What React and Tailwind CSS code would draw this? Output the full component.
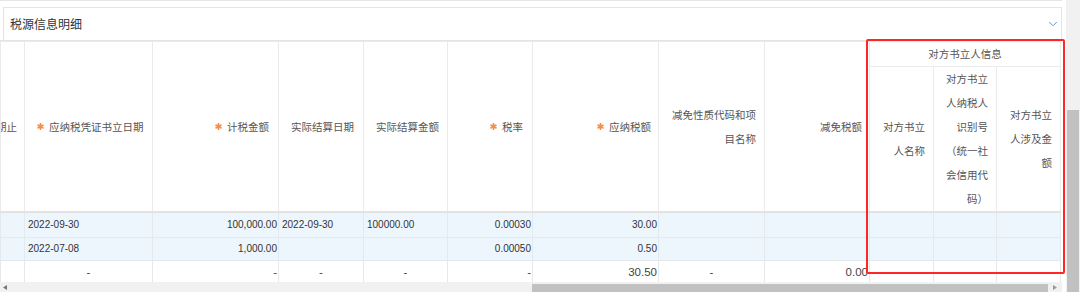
import React from 'react';
import {ChevronDown} from 'lucide-react';

const widths = ['w-[24px]', 'w-[128px]', 'w-[126px]', 'w-[85px]', 'w-[84px]', 'w-[85px]', 'w-[126px]', 'w-[106px]', 'w-[105px]', 'w-[64px]', 'w-[63px]', 'w-[64px]'];

function Star() {
    return (
        <svg width="7" height="7" viewBox="0 0 10 10" className="inline-block shrink-0">
            <g stroke="#f98c47" strokeWidth="2.6" strokeLinecap="round">
                <line x1="5" y1="1.2" x2="5" y2="8.8"/>
                <line x1="1.7" y1="3.1" x2="8.3" y2="6.9"/>
                <line x1="1.7" y1="6.9" x2="8.3" y2="3.1"/>
            </g>
        </svg>
    );
}

const th = "border border-[#ebebeb] font-normal text-[10.5px] leading-[24px] text-[#555] align-middle";

const rows = [
    ["", "2022-09-30", "100,000.00", "2022-09-30", "100000.00", "0.00030", "30.00", "", "", "", "", ""],
    ["", "2022-07-08", "1,000.00", "", "", "0.00050", "0.50", "", "", "", "", ""],
];
const align = ["text-left", "text-left", "text-right", "text-left", "text-left", "text-right", "text-right", "text-left", "text-right", "text-right", "text-right", "text-right"];

const totals = [
    ["", "text-center"], ["-", "text-center"], ["-", "text-right"], ["-", "text-center"], ["-", "text-center"],
    ["-", "text-right"], ["30.50", "text-right"], ["-", "text-center"], ["0.00", "text-right"],
    ["-", "text-center"], ["-", "text-center"], ["-", "text-center"],
];

export default function App() {
    return (
        <div className="relative w-[1080px] h-[292px] overflow-hidden bg-white flex font-['Noto_Sans_CJK_SC',sans-serif]">
            <div className="w-[1066px] flex flex-col">
                <div className="h-[7px] border-t border-[#e6e6e6] w-[1062px]"></div>
                <div className="ml-[3px] w-[1059px] h-[33px] border border-b-0 border-[#e4e4e4] flex items-center justify-between pl-[6px] pr-[1px]">
                    <span className="text-[12px] text-[#333]">税源信息明细</span>
                    <ChevronDown size={14} strokeWidth={1.6} color="#4a90d9"/>
                </div>
                <div className="w-[1062px] h-[242px] overflow-hidden border-t border-[#e4e4e4]">
                    <table className="table-fixed border-collapse w-[1060px]">
                        <colgroup>
                            {widths.map((w, i) => <col key={i} className={w}/>)}
                        </colgroup>
                        <thead>
                        <tr className="h-[24px]">
                            <th rowSpan={2} className={th + " border-b-2 border-b-[#e2e2e2] pr-[7px]"}>
                                <div className="flex justify-end overflow-hidden whitespace-nowrap">
                                    <span className="shrink-0">有效期止</span>
                                </div>
                            </th>
                            <th rowSpan={2} className={th + " border-b-2 border-b-[#e2e2e2] text-left pl-[12px]"}>
                                <span className="inline-flex items-center gap-[5px]"><Star/>应纳税凭证书立日期</span>
                            </th>
                            <th rowSpan={2} className={th + " border-b-2 border-b-[#e2e2e2] text-right pr-[9px]"}>
                                <span className="inline-flex items-center gap-[5px]"><Star/>计税金额</span>
                            </th>
                            <th rowSpan={2} className={th + " border-b-2 border-b-[#e2e2e2] text-left pl-[12px]"}>实际结算日期</th>
                            <th rowSpan={2} className={th + " border-b-2 border-b-[#e2e2e2] text-left pl-[12px]"}>实际结算金额</th>
                            <th rowSpan={2} className={th + " border-b-2 border-b-[#e2e2e2] text-right pr-[9px]"}>
                                <span className="inline-flex items-center gap-[5px]"><Star/>税率</span>
                            </th>
                            <th rowSpan={2} className={th + " border-b-2 border-b-[#e2e2e2] text-right pr-[7px]"}>
                                <span className="inline-flex items-center gap-[5px]"><Star/>应纳税额</span>
                            </th>
                            <th rowSpan={2} className={th + " border-b-2 border-b-[#e2e2e2] text-right pl-[12px] pr-[8px]"}>减免性质代码和项目名称</th>
                            <th rowSpan={2} className={th + " border-b-2 border-b-[#e2e2e2] text-right pr-[7px]"}>减免税额</th>
                            <th colSpan={3} className={th + " text-center h-[24px]"}>对方书立人信息</th>
                        </tr>
                        <tr className="h-[144px]">
                            <th className={th + " border-b-2 border-b-[#e2e2e2] text-right pl-[12px] pr-[8px]"}>对方书立人名称</th>
                            <th className={th + " border-b-2 border-b-[#e2e2e2] text-right pl-[12px] pr-[8px]"}>对方书立人纳税人识别号（统一社会信用代码）</th>
                            <th className={th + " border-b-2 border-b-[#e2e2e2] text-right pl-[12px] pr-[8px]"}>对方书立人涉及金额</th>
                        </tr>
                        </thead>
                        <tbody className="font-['Liberation_Sans','Noto_Sans_CJK_SC',sans-serif] text-[#333]">
                        {rows.map((r, ri) => (
                            <tr key={ri} className={ri === 0 ? "h-[25px] bg-[#eef6fd]" : "h-[23px] bg-[#eef6fd]"}>
                                {r.map((v, ci) => (
                                    <td key={ci}
                                        className={"border border-[#e4e9ee] text-[10px] leading-[14px] whitespace-nowrap overflow-hidden px-[3px] " + align[ci] + (align[ci] === "text-right" ? " pr-[1px]" : "")}>
                                        {v}
                                    </td>
                                ))}
                            </tr>
                        ))}
                        <tr className="h-[23px] bg-white">
                            {totals.map(([v, a], ci) => (
                                <td key={ci}
                                    className={"border border-[#e8e8e8] text-[11.5px] leading-[14px] text-[#444] whitespace-nowrap overflow-hidden px-[1px] " + a}>
                                    {v}
                                </td>
                            ))}
                        </tr>
                        </tbody>
                    </table>
                </div>
                <div className="w-[1062px] h-[10px] bg-[#f1f1f1] flex items-end">
                    <div className="w-[532px] h-[10px] flex items-center pl-[3px]">
                        <svg width="4" height="5" viewBox="0 0 4 5"><path d="M4 0 L0 2.5 L4 5 Z" fill="#777"/></svg>
                    </div>
                    <div className="w-[516px] h-[8px] bg-[#c1c1c1]"></div>
                    <div className="w-[14px] h-[10px] flex items-center justify-center">
                        <svg width="4" height="5" viewBox="0 0 4 5"><path d="M0 0 L4 2.5 L0 5 Z" fill="#999"/></svg>
                    </div>
                </div>
            </div>
            <div className="w-[14px] h-full bg-[#f1f1f1] flex flex-col pt-[110px] px-[1px]">
                <div className="flex-1 bg-[#c1c1c1]"></div>
            </div>
            <div className="absolute left-[866px] top-[39px] w-[199px] h-[235px] border-2 border-[#ff2626] rounded-[2px]"></div>
        </div>
    );
}
